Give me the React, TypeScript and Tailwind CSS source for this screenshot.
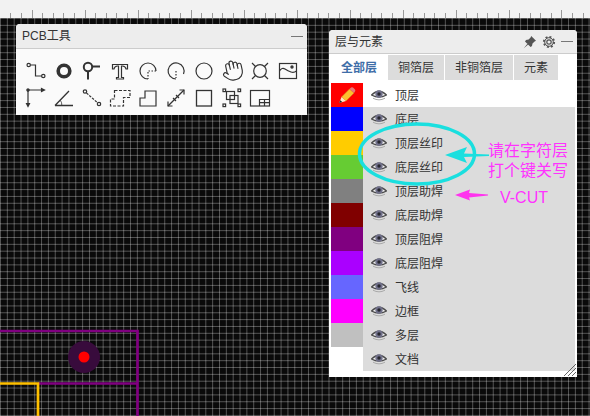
import React from "react";
import { Hand } from "lucide-react";

const Ic = ({ children }: { children: React.ReactNode }) => (
  <div className="flex h-[27px] w-7 items-center justify-center">
    <svg width="24" height="24" viewBox="-2 -2 24 24" fill="none" stroke="#333" strokeWidth="1.2">
      {children}
    </svg>
  </div>
);

const row1 = [
  <>
    <circle cx="2.7" cy="4" r="1.7" />
    <circle cx="17.3" cy="15" r="1.7" />
    <path d="M4.4 4H9.5V15H15.6" />
  </>,
  <circle cx="10" cy="10" r="5.8" strokeWidth="3.6" />,
  <>
    <circle cx="6" cy="6" r="4.2" strokeWidth="2" />
    <path d="M10.5 5.5H18M6 10.5V18.5" strokeWidth="2" />
  </>,
  <path d="M2.5 3.5H17.5V8H16Q15.5 5 12.5 5H11.5V16.5H13.5V18H6.5V16.5H8.5V5H7.5Q4.5 5 4 8H2.5Z" />,
  <>
    <path d="M18 10A8 8 0 1 0 10 18" />
    <path d="M18 10H10V18" strokeDasharray="1.5 1.5" />
  </>,
  <>
    <path d="M10 18A8 8 0 1 1 17.5 13" />
    <path d="M10 10V17" strokeDasharray="1.5 1.5" />
  </>,
  <circle cx="10" cy="10" r="8" />,
  <g />,
  <>
    <circle cx="10" cy="10" r="6.3" />
    <path d="M2 2L5.5 5.5M18 2L14.5 5.5M2 18L5.5 14.5M18 18L14.5 14.5" />
  </>,
  <>
    <rect x="1.5" y="2.5" width="17" height="15" />
    <path d="M1.5 10Q4 6 7 8T13 11T18.5 10" />
    <circle cx="14" cy="6" r="1.1" fill="#333" />
  </>,
];

const row2 = [
  <>
    <path d="M2 18V2H18" />
    <path d="M15.5 0.5L18.5 2L15.5 3.5ZM0.5 15.5L2 18.5L3.5 15.5Z" fill="#333" />
    <circle cx="2" cy="2" r="1.1" fill="#333" />
  </>,
  <>
    <path d="M1 17.5H19M1 17.5L15 3" strokeWidth="1.3" />
    <path d="M6.5 12.5Q8 14.5 7.8 17.5" strokeWidth="0.8" />
  </>,
  <>
    <circle cx="3" cy="3.5" r="1.7" />
    <circle cx="17" cy="16" r="1.7" />
    <path d="M4.5 5L15.5 14.7" strokeDasharray="2.5 1.2" />
  </>,
  <path d="M4.5 2.5H20V9.5H13.5V18H0.5V11H4.5Z" strokeDasharray="3 1.5" />,
  <path d="M2 18V10H7V3H18V18Z" />,
  <>
    <path d="M2 18L18 2" />
    <path d="M2 13.5V18H6.5M13.5 2H18V6.5" />
    <path d="M7 10L10 13M10 7L13 10" />
  </>,
  <rect x="2.5" y="2.5" width="15" height="15.5" strokeWidth="1.3" />,
  <>
    <rect x="4.5" y="3.5" width="8" height="8" />
    <rect x="8" y="7.5" width="8" height="8" />
    <rect x="1" y="1" width="2.6" height="2.6" />
    <rect x="16" y="1" width="2.6" height="2.6" />
    <rect x="1" y="16" width="2.6" height="2.6" />
    <rect x="16" y="16" width="2.6" height="2.6" />
  </>,
  <>
    <rect x="0.5" y="2.5" width="19" height="15.5" />
    <path d="M9.5 18V11.5H19.5M9.5 14.7H19.5M14.5 11.5V18" />
  </>,
];

const layers: [string, string][] = [
  ["#ff0000", "顶层"],
  ["#0000ff", "底层"],
  ["#ffcc00", "顶层丝印"],
  ["#66cc33", "底层丝印"],
  ["#808080", "顶层助焊"],
  ["#800000", "底层助焊"],
  ["#800080", "顶层阻焊"],
  ["#aa00ff", "底层阻焊"],
  ["#6666ff", "飞线"],
  ["#ff00ff", "边框"],
  ["#c0c0c0", "多层"],
  ["#ffffff", "文档"],
];

const Eye = () => (
  <svg width="16" height="12" viewBox="0 0 16 12" className="shrink-0">
    <path d="M0.5 6Q8 -1.5 15.5 6Q8 10.5 0.5 6Z" fill="#eeeeee" stroke="#4a4a4a" strokeWidth="1.2" />
    <circle cx="8" cy="5" r="3.7" fill="#70708a" />
    <circle cx="8" cy="5" r="1.7" fill="#26262e" />
    <path d="M2 9.2Q8 12.5 14 9.2" fill="none" stroke="#aaa" strokeWidth="1" />
  </svg>
);

const Pencil = () => (
  <svg width="18" height="18" viewBox="0 0 18 18">
    <path d="M3.5 11L11.5 3L16 7L8 15Z" fill="#fdc02f" stroke="#c98a18" strokeWidth="0.5" />
    <path d="M11.5 3L13 1.5Q14 0.8 15 1.5L17 3.5Q17.7 4.5 17 5.5L16 7Z" fill="#e87878" />
    <path d="M3.5 11L8 15L1.2 17Z" fill="#ffe9c4" />
    <path d="M2.3 14.2L4.3 15.9L1.2 17Z" fill="#222" />
  </svg>
);

const Grip = () => (
  <svg width="14" height="14" viewBox="0 0 14 14" className="absolute bottom-0 right-0" stroke="#666" strokeWidth="1">
    <path d="M13 1L1 13M13 5L5 13M13 9L9 13" />
  </svg>
);

const ticks = Array.from({ length: 56 }, (_, i) => i);

export default function App() {
  return (
    <div className="relative flex h-[416px] w-[590px] flex-col overflow-hidden font-['Liberation_Sans','Noto_Sans_CJK_SC',sans-serif] text-[12px] text-[#333]">
      <div className="h-[18px] shrink-0 bg-[#f2f2f2]">
        <svg width="590" height="18" stroke="#999" strokeWidth="1">
          {ticks.map((i) => {
            const x = Math.round(10.6 * i + 10.3) + 0.5;
            return <line key={i} x1={x} x2={x} y1={(i + 3) % 5 === 0 ? 10 : 13} y2={18} />;
          })}
        </svg>
      </div>
      <div className="relative flex-1 bg-[#0a0a0a] bg-[linear-gradient(to_right,rgba(255,255,255,.3)_1px,transparent_1px),linear-gradient(to_bottom,rgba(255,255,255,.3)_1px,transparent_1px)] bg-[size:6.85px_6.85px]">
        <svg width="590" height="398" className="absolute inset-0" fill="none">
          <path d="M0 313H137.5V398M38 365.5H137.5" stroke="#800080" strokeWidth="2.7" />
          <path d="M0 365.5H38V398" stroke="#ffc000" strokeWidth="2.7" />
          <circle cx="84" cy="339" r="16" fill="#380b3c" />
          <circle cx="84" cy="339" r="5.5" fill="#ff0000" />
        </svg>

        <div className="absolute left-4 top-[6px] h-[91px] w-[291px] rounded-t bg-[#fafafa]">
          <div className="flex h-[25px] items-center justify-between rounded-t border-b border-[#ccc] bg-[#ededed] pl-[6px] pr-1">
            <span>PCB工具</span>
            <span className="h-px w-3 bg-[#777]" />
          </div>
          <div className="pl-[6px] pt-2">
            <div className="flex">
              {row1.map((c, i) =>
                i === 7 ? (
                  <div key={i} className="flex h-[27px] w-7 items-center justify-center">
                    <Hand size={23} strokeWidth={1.2} color="#333" className="-rotate-12" />
                  </div>
                ) : (
                  <Ic key={i}>{c}</Ic>
                )
              )}
            </div>
            <div className="flex">
              {row2.map((c, i) => (
                <Ic key={i}>{c}</Ic>
              ))}
            </div>
          </div>
        </div>

        <div className="absolute left-[329px] top-3 h-[347px] w-[248px] rounded-t bg-white px-[2px]">
          <div className="-mx-[2px] flex h-6 items-center rounded-t border-b border-[#ccc] bg-[#ededed] pl-[6px] pr-1">
            <span className="flex-1">层与元素</span>
            <svg width="14" height="14" viewBox="0 0 14 14" fill="#555" className="mr-[5px]">
              <path d="M8.2 1L13 5.8L11.6 6.4L9.5 8.4L9 11L7.6 12L2 6.4L3 5L5.6 4.5L7.6 2.4ZM4.4 8.8L0.8 13.2L5.2 9.6Z" />
            </svg>
            <svg width="14" height="14" viewBox="0 0 14 14" fill="none" stroke="#555" className="mr-[5px]">
              <circle cx="7" cy="7" r="2.2" strokeWidth="1.2" />
              <circle cx="7" cy="7" r="5" strokeWidth="2.2" strokeDasharray="1.9 2" />
              <circle cx="7" cy="7" r="4.3" strokeWidth="1" />
            </svg>
            <span className="h-px w-3 bg-[#777]" />
          </div>
          <div className="mt-px flex h-[25px] gap-px">
            <div className="flex w-14 items-center justify-center bg-white font-bold text-[#3f6ea8]">全部层</div>
            <div className="flex w-14 items-center justify-center bg-[#dcdcdc]">铜箔层</div>
            <div className="flex w-[68px] items-center justify-center bg-[#dcdcdc]">非铜箔层</div>
            <div className="flex w-11 items-center justify-center bg-[#dcdcdc]">元素</div>
          </div>
          <div className="mt-[3px]">
            {layers.map(([color, name], i) => (
              <div key={name} className={`flex h-6 items-center ${i === 0 ? "bg-white" : "bg-[#dcdcdc]"}`}>
                <div className="flex h-6 w-8 items-center justify-center" style={{ backgroundColor: color }}>
                  {i === 0 && <Pencil />}
                </div>
                <div className="ml-2 flex items-center gap-2">
                  <Eye />
                  <span className="mt-[2px]">{name}</span>
                </div>
              </div>
            ))}
          </div>
          <Grip />
        </div>

        <svg width="590" height="398" className="absolute inset-0" fill="none">
          <ellipse cx="417" cy="136" rx="57.5" ry="30" stroke="#1adfdf" strokeWidth="3.5" />
          <path d="M445 137L467 129L464 135.5L489 136.5V138L464 139L467 145Z" fill="#1adfdf" />
          <path d="M455 177L470 171.5L469 175L488 176.5V177.5L469 179.5L470 182.5Z" fill="#ff33ee" />
        </svg>
        <div className="absolute left-[488px] top-[123px] text-[16px] leading-[20px] text-[#ff33ff]">
          <div>请在字符层</div>
          <div>打个键关写</div>
        </div>
        <div className="absolute left-[500px] top-[170px] text-[16px] leading-[20px] text-[#ff33ff]">V-CUT</div>
      </div>
    </div>
  );
}
